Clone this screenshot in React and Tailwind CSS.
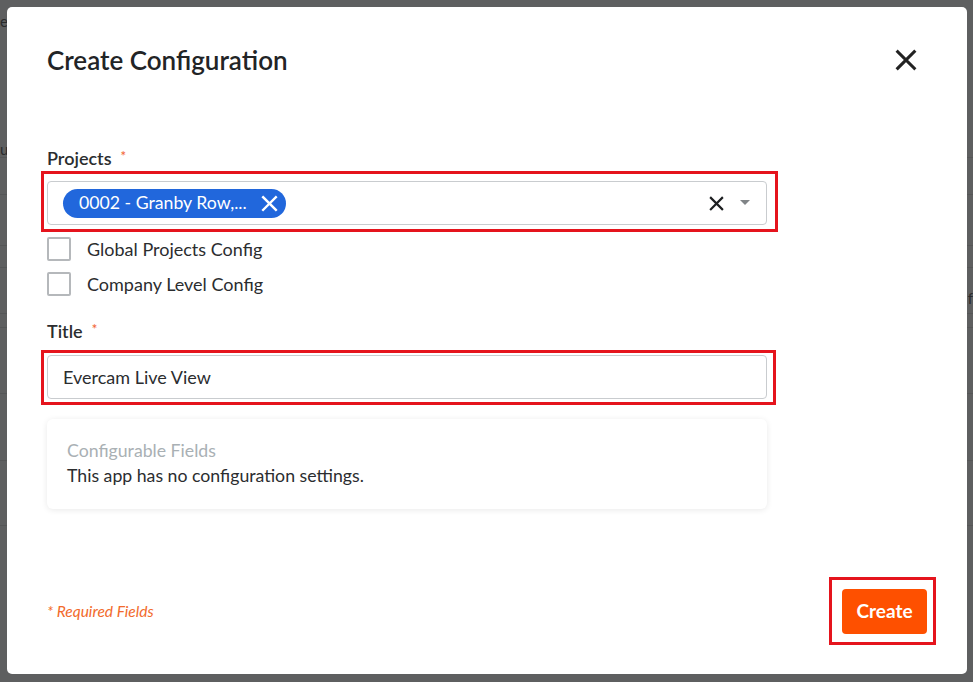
import React from "react";

const font = { fontFamily: "Lato, 'Noto Sans', sans-serif" };

function CloseIcon({ size = 22, stroke = 3.4, color = "#222" }) {
  return (
    <svg width={size} height={size} viewBox="0 0 24 24" fill="none">
      <path d="M3 3 L21 21 M21 3 L3 21" stroke={color} strokeWidth={stroke} strokeLinecap="square" />
    </svg>
  );
}

function Checkbox({ label }) {
  return (
    <label className="flex items-center h-[24px] gap-[16px]">
      <span className="w-[24px] h-[24px] rounded-[2px] border-2 border-[#b5b8bb] bg-white" />
      <span className="text-[18px] text-[#2b2d2f]">{label}</span>
    </label>
  );
}

function Required() {
  return <span className="text-[#f26a3c] text-[13px] ml-[9px] relative top-[-4px]">*</span>;
}

function Backdrop() {
  // rows of the page underneath the dimmed overlay
  const rows = [157, 194, 245, 267, 313, 327, 393, 460, 525];
  return (
    <div className="absolute inset-0 bg-[#5e5f60]">
      <div className="absolute left-0 top-[10px] text-[15px] text-[#2a2b2c]">er</div>
      <div className="absolute left-0 top-[138px] text-[15px] text-[#2a2b2c]">u</div>
      <div className="absolute right-0 top-[287px] text-[15px] text-[#2a2b2c]">f</div>
      {rows.map((y) => (
        <div key={y} className="absolute left-0 right-0 h-px bg-[#555657]" style={{ top: y }} />
      ))}
    </div>
  );
}

export default function App() {
  return (
    <div className="relative w-[973px] h-[682px] overflow-hidden" style={font}>
      <Backdrop />
      <div className="absolute left-[7px] top-[7px] w-[960px] h-[667px] bg-white rounded-[5px] flex flex-col pl-[40px] pr-[49px]">
        {/* header */}
        <div className="flex items-center justify-between pt-[37px] h-[68px]">
          <h1 className="text-[26px] font-semibold text-[#222426] leading-[30px]">Create Configuration</h1>
          <button className="w-[24px] h-[24px] flex items-center justify-center">
            <CloseIcon />
          </button>
        </div>

        <div className="w-[720px] flex flex-col mt-[71px]">
          {/* projects */}
          <div className="text-[18px] font-semibold text-[#2b2d2f] leading-[24px] h-[24px]">
            Projects<Required />
          </div>
          <div className="relative mt-[11px]">
            <div className="absolute left-[-6px] top-[-10px] w-[737px] h-[61px] border-[3px] border-[#e5141d] pointer-events-none" />
            <div className="h-[44px] rounded-[4px] border border-[#c9cccf] flex items-center pl-[15px] pr-[16px]">
              <span className="h-[29px] w-[223px] rounded-full bg-[#2167dc] text-white text-[17.7px] flex items-center pl-[16px] pr-[8px] justify-between">
                <span>0002 - Granby Row,...</span>
                <CloseIcon size={17} stroke={3.4} color="#ffffff" />
              </span>
              <span className="flex-1" />
              <CloseIcon size={15} stroke={3.4} color="#1d1f21" />
              <svg className="ml-[16px]" width="10" height="6" viewBox="0 0 10 6">
                <path d="M0 0 L10 0 L5 5 Z" fill="#808487" />
              </svg>
            </div>
          </div>

          <div className="flex flex-col gap-[11px] mt-[12px]">
            <Checkbox label="Global Projects Config" />
            <Checkbox label="Company Level Config" />
          </div>

          {/* title */}
          <div className="text-[18px] font-semibold text-[#2b2d2f] leading-[24px] h-[24px] mt-[23px]">
            Title<Required />
          </div>
          <div className="relative mt-[12px]">
            <div className="absolute left-[-6px] top-[-5px] w-[735px] h-[55px] border-[3px] border-[#e5141d] pointer-events-none" />
            <div className="h-[44px] rounded-[4px] border border-[#c9cccf] flex items-center px-[15px] text-[18px] text-[#2b2d2f]">
              Evercam Live View
            </div>
          </div>

          {/* configurable fields */}
          <div className="mt-[20px] h-[90px] rounded-[6px] bg-white shadow-[0_1px_6px_rgba(0,0,0,0.09)] px-[20px] pt-[20px]">
            <div className="text-[17.7px] leading-[24px] text-[#a9b0b4]">Configurable Fields</div>
            <div className="text-[17.7px] leading-[24px] text-[#2b2d2f] mt-[1px]">This app has no configuration settings.</div>
          </div>
        </div>

        <div className="flex-1" />

        {/* footer */}
        <div className="flex items-center justify-between h-[45px] mb-[40px]">
          <span className="italic text-[15.5px] text-[#f26a2c]">* Required Fields</span>
          <div className="relative mr-[-9px]">
            <div className="absolute left-[-13px] top-[-12px] w-[107px] h-[68px] border-[3px] border-[#e5141d] pointer-events-none" />
            <button className="h-[45px] w-[85px] rounded-[4px] bg-[#fe5000] text-white text-[19px] font-bold">
              Create
            </button>
          </div>
        </div>
      </div>
    </div>
  );
}
